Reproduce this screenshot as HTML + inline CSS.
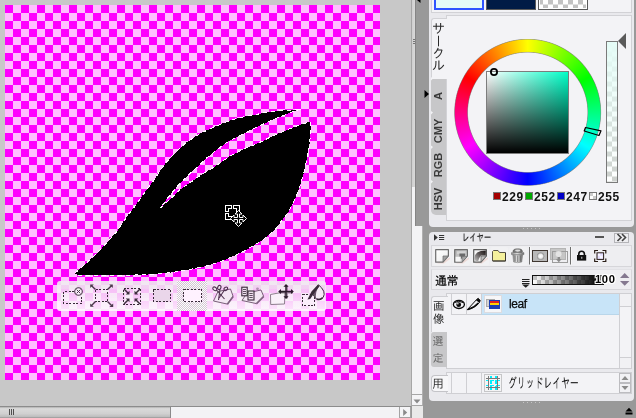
<!DOCTYPE html>
<html lang="ja">
<head>
<meta charset="utf-8">
<title>leaf</title>
<style>
*{box-sizing:border-box;margin:0;padding:0}
html,body{width:636px;height:418px;overflow:hidden;background:#999}
body{position:relative;font-family:"Liberation Sans","Noto Sans CJK JP",sans-serif;font-size:11px;color:#222}
.abs{position:absolute;will-change:transform}
#work{left:0;top:0;width:411px;height:406px;background:#c8c8c8}
#canvas{left:5px;top:5px;width:375px;height:375px;background:conic-gradient(#ffbfff 25%,#ff00ff 0 50%,#ffbfff 0 75%,#ff00ff 0) 0 0/16px 16px}
#leaf{left:0;top:0;width:411px;height:406px}
/* floating toolbar */
#ftb{left:57px;top:281px;width:269px;height:30px;border-radius:3px;background:linear-gradient(rgba(240,236,240,.9),rgba(240,236,240,.88) 26%,rgba(244,240,244,.8) 27%,rgba(246,242,246,.82) 50%,rgba(250,246,250,.88) 78%,rgba(252,250,252,.92));}
#ftb .hl{left:120px;top:0;width:30px;height:30px;background:conic-gradient(rgba(200,196,200,.8) 25%,rgba(255,255,255,.75) 0 50%,rgba(200,196,200,.8) 0 75%,rgba(255,255,255,.75) 0) 0 0/2px 2px}
/* scrollbars */
#hsb{left:0;top:406px;width:411px;height:12px;background:#f3f3f5;border-top:1px solid #8c8c8c}
#hthumb{left:0;top:407px;width:171px;height:11px;background:linear-gradient(#b0b0b0,#dadada 15%,#d0d0d0 60%,#bcbcbc 90%,#8e8e8e);border-right:1px solid #8a8a8a}
#hbtn{left:399px;top:407px;width:12px;height:11px;background:#f4f4f6;border:1px solid #a4a4a4;border-top:none}
#vsb{left:411px;top:0;width:12px;height:406px;background:#f3f3f5;border-left:1px solid #a6a6a6;border-right:1px solid #b0b0b0}
#vthumb{left:412px;top:0;width:4px;height:187px;background:linear-gradient(90deg,#cfcfcf,#dcdcdc)}
#vbtn{left:411px;top:394px;width:12px;height:12px;background:#f4f4f6;border:1px solid #a6a6a6;border-right-color:#b0b0b0}
#corner{left:412px;top:406px;width:11px;height:12px;background:#e9e9e9}
#dock{left:415px;top:0;width:14px;height:226px;background:#999;border-left:1px solid #858585}
/* panels */
.panel{background:#e9e9ed}
#p1{left:429px;top:0;width:205px;height:226.500px}
#p2{left:429px;top:232px;width:205px;height:168.500px;border-radius:4px}
.inner{background:#f3f3f6;border:1px solid #d2d2d6}

/* colour panel */
.sw{top:-10px;height:20px;width:50px;border:1px solid #5a5a5a}
#tabA{left:431px;top:18px;width:16px;height:61px;background:#f3f3f6;border:1px solid #d2d2d6;border-right:none;border-bottom:none;border-radius:3px 0 0 0}
.vt{writing-mode:vertical-rl;font-family:"Liberation Sans","IPAGothic",sans-serif;font-size:13px;line-height:13px;color:#2a2a2a;letter-spacing:-1px}
.itab{left:431px;width:15px;background:#c7c7c9}
.itab span{position:absolute;left:calc(50% - 1px);top:50%;transform:translate(-50%,-50%) rotate(-90deg);font-weight:bold;font-size:11px;line-height:11px;color:#3a3a3a;white-space:nowrap}
#ring{left:454px;top:39px;width:148px;height:148px;background:conic-gradient(from 0deg at 73.7px 73.3px,#ff0,#0f0,#0ff,#00f,#f0f,#f00,#ff0);-webkit-mask:radial-gradient(circle at 73.7px 73.3px,transparent 59.700px,#000 60.500px,#000 72.700px,transparent 73.500px);mask:radial-gradient(circle at 73.7px 73.3px,transparent 59.700px,#000 60.500px,#000 72.700px,transparent 73.500px)}
#ringin{left:454px;top:39px;width:148px;height:148px;background:radial-gradient(circle at 73.7px 73.3px,transparent 59.300px,rgba(110,110,110,.55) 60.100px,transparent 60.900px,transparent 72.300px,rgba(110,110,110,.55) 73.100px,transparent 73.900px)}
#sv{left:486px;top:71px;width:83px;height:83px;border:1px solid #7d7d7d;background:linear-gradient(to top,#000,rgba(0,0,0,0)),linear-gradient(to right,#fff,#00ffc8)}
#svm{left:490.2px;top:68.2px;width:7.6px;height:7.6px;border:1.9px solid #000;border-radius:50%}
#huem{left:584px;top:128.5px;width:17px;height:7px;border:1px solid #000;transform:rotate(17deg)}
#alpha{left:606px;top:41px;width:12px;height:142px;border:1px solid #7a7a7a;background:linear-gradient(#e5fcf7,rgba(229,252,247,0)),conic-gradient(#fff 25%,#cdd0cd 0 50%,#fff 0 75%,#cdd0cd 0) 0 -.5px/10px 10px}
#atri{left:618px;top:33px;width:0;height:0;border-top:8px solid transparent;border-bottom:8px solid transparent;border-right:8px solid #5a5a5a}
.cv{top:192px;width:8px;height:8px;border:1px solid #777}
.cn{top:191px;font-weight:bold;font-size:12px;line-height:12px;color:#111;letter-spacing:.55px;margin-left:-.8px}

/* layer panel */
.jp{font-family:"Liberation Sans","IPAGothic",sans-serif}
.box{background:#eeeef1;border:1px solid #d6d6da}
.lst{background:#f3f3f6;border:1px solid #cfcfd3}
.cell{border-left:1px solid #cfcfd3;background:#f3f3f6}
.gtab{left:431px;width:16px;padding-right:2px;background:#c7c7c9;color:#6a6a6a;font-size:11px;line-height:17px;text-align:center}
</style>
</head>
<body>
<div id="work" class="abs"></div>
<div id="canvas" class="abs"></div>
<svg id="leaf" class="abs" viewBox="0 0 411 406" shape-rendering="crispEdges">
<path id="lp" fill="#000" stroke="#fff" stroke-width="1" stroke-dasharray="4 4" d="M74.8,273.3 L82,267 87.9,261.7 93.9,256.3 99.9,250.3 105.9,243.7 111.8,237.2 117.8,230.3 122,223.6 127.9,215.3 133.9,207.5 139.9,199.1 145.9,190.8 151.8,183 154.3,179.6 160,170.9 165.8,163 171.5,156.6 178.7,149.4 185.9,142.9 193,137.9 200.2,133.6 207.4,130 214.5,126.9 222,123.6 231.5,119.8 244.9,116.6 255,114.9 261,113.4 267,112.2 272.9,111.4 278.9,110.8 284.9,110.3 290.9,110 296.8,109.6 302.2,109 296.8,110.4 290.9,112.5 284.9,114.9 278.9,117.3 272.9,119.7 267,122.5 261,125.1 255,128.1 247.8,131.6 241.8,134.6 235.9,137.5 229.9,140.5 223.9,144.7 217.9,148.9 212,153.7 206,158.5 200,164.6 196.8,167.6 190.9,172.5 184.9,178.5 178.9,184.5 172.9,191.7 167,198.8 159.8,208.4 167,201.8 172.9,196.5 178.9,190.5 184.9,186.3 190.9,182.1 196.8,177.9 202.8,173.7 208.8,170.2 214.5,166.9 218,164.3 223.9,160.3 229.9,156.1 235.9,153.1 241.8,150.1 247.8,147.1 254.5,144.8 261,141.8 267,138.8 272.9,135.9 278.9,133.2 284.9,130.8 290.9,128.4 296.8,126.1 302.8,123.9 310.6,121.5 310.6,129.9 310,139.4 309,147.8 307.8,152 305.9,163.9 303,175.9 299.5,187.8 294.7,199.8 288.7,211.8 280.3,222.5 276.2,228.5 271.7,232.5 264.8,238.4 259.7,241.8 247.9,248.9 236.1,254.8 224.3,260.2 212.5,264.2 200.8,267.3 189,269.6 177.2,271.7 165.4,273.2 153.6,274.3 130,275.2 78,275.2Z"/>
</svg>
<div id="ftb" class="abs"><div class="hl abs"></div></div>
<svg class="abs" style="left:56px;top:280px;overflow:visible" width="271" height="31" viewBox="56 280 271 31">
<defs><filter id="sh" x="-20%" y="-20%" width="150%" height="150%"><feGaussianBlur stdDeviation=".5"/></filter></defs>
<g fill="none" stroke="#3a2a3a" stroke-width="1" stroke-dasharray="2 1.5" shape-rendering="crispEdges">
<path d="M74,291.5 H63.5 V303.5 H81.5 V296"/>
<rect x="95.5" y="289.5" width="12" height="12"/>
<rect x="123.5" y="288.5" width="17" height="16"/>
<rect x="153.5" y="289.5" width="17" height="12" fill="#ead6ea"/>
<rect x="183.500" y="289.5" width="18" height="12" fill="#fff2ff"/>
<rect x="302.5" y="294.500" width="12" height="11" fill="#fbeefb"/>
</g>
<!-- circle x -->
<circle cx="78.5" cy="291.5" r="3.8" fill="#fbeffb" stroke="#4a3a4a" stroke-width="1.1"/>
<path d="M76.6,289.6 L80.4,293.4 M80.4,289.6 L76.6,293.4" stroke="#4a3a4a" stroke-width="1"/>
<!-- expand arrows -->
<g stroke="#4a384a" stroke-width="1.4" fill="#4a384a">
<path d="M95.500,289.5 L91.500,285.8 M107.5,289.5 L111.500,285.8 M95.500,301.5 L91.500,305.5 M107.5,301.5 L111.800,305.800" fill="none"/>
<path d="M90.200,284.6 h3.600 l-3.600,3.400Z M112.800,284.6 h-3.600 l3.600,3.400Z M90.200,306.800 h3.600 l-3.600,-3.400Z M113.200,307 h-3.800 l3.800,-3.600Z" stroke="none"/>
</g>
<!-- contract arrows -->
<g stroke="#3e2e3e" stroke-width="1.5" fill="#3e2e3e">
<path d="M124,289 L128,293 M140,289 L136,293 M124,304 L128,300 M140,304 L136,300" fill="none"/>
<path d="M129.500,294.500 h-3.800 l3.800,-3.800Z M134.500,294.500 h3.800 l-3.800,-3.800Z M129.500,298.500 h-3.800 l3.800,3.800Z M134.500,298.500 h3.800 l-3.800,3.800Z" stroke="none"/>
</g>
<!-- cut -->
<path d="M218,291.500 L230.500,289 L233,296 L227,304 L213.500,301Z" fill="#f3e6f3" stroke="#6a506a" stroke-width=".9"/>
<path d="M227,304 L233,296 L233.800,297 L227.800,305Z" fill="#7a5a7a"/>
<g fill="none" stroke="#503050" stroke-width="1.100">
<ellipse cx="214.800" cy="288.800" rx="2.200" ry="1.600" transform="rotate(35 214.800 288.800)"/>
<ellipse cx="219.300" cy="287.500" rx="1.600" ry="2.200" transform="rotate(20 219.300 287.500)"/>
<path d="M216.500,290 L224.500,299 M220,289.500 L218.500,300"/>
<ellipse cx="225.800" cy="288.800" rx="2" ry="1.500" transform="rotate(-35 225.800 288.800)"/>
<path d="M224.500,290 L219,298"/>
</g>
<!-- copy -->
<path d="M247,293 L261,290 L263.500,296 L256,303.500 L242,300.500Z" fill="#f3e6f3" stroke="#6a506a" stroke-width=".9"/>
<path d="M256,303.500 L263.500,296 L264.300,297 L256.800,304.500Z" fill="#7a5a7a"/>
<rect x="241.800" y="287.200" width="5.400" height="8.600" fill="#f0e0f0" stroke="#3a2a3a" stroke-width="1.100"/>
<path d="M243,289.500h3M243,291.500h3M243,293.500h3" stroke="#3a2a3a" stroke-width=".8"/>
<rect x="248" y="291" width="6" height="9" fill="#f0e0f0" stroke="#3a2a3a" stroke-width="1.100"/>
<path d="M249.300,293.500h3.400M249.300,295.500h3.400M249.300,297.500h3.400" stroke="#3a2a3a" stroke-width=".8"/>
<circle cx="257.500" cy="288.800" r="1.400" fill="#b090b0"/>
<!-- move -->
<path d="M270.500,294.500 L285,291.800 L284.500,304 L270.700,304.500Z" fill="#f9f0f9" stroke="#8d7d8d" stroke-width="1"/>
<g filter="url(#sh)" opacity=".45"><path d="M279.500,292.500 H293 M286.800,285.500 V298.500" stroke="#2a1a2a" stroke-width="2" fill="none"/></g>
<g stroke="#2a1a2a" stroke-width="1.400" fill="#2a1a2a">
<path d="M279.500,291.500 H292.500 M286,285.500 V297.500" fill="none"/>
<path d="M278.200,291.500 l2.800,-2.600 v5.200Z M293.800,291.500 l-2.800,-2.600 v5.200Z M286,284 l-2.600,2.800 h5.200Z M286,299 l-2.600,-2.800 h5.200Z" stroke="none"/>
</g>
<!-- bucket -->
<path d="M318.500,284.800 Q326.500,291.500 323.300,297.300 Q320.500,300.800 316.300,299 L312.500,294Z" fill="#f6eaf6" stroke="#3a2a3a" stroke-width="1" stroke-linejoin="round"/>
<path d="M318.500,284.800 L312.500,294 L316.300,299 Q314.500,292 319.500,286Z" fill="#6a566a"/>
<path d="M322.500,297.800 Q320.500,300.300 316.800,299.200" fill="none" stroke="#3a2a3a" stroke-width="1.600"/>
<path d="M318,284.500 L311.500,291.500 L307.500,299.500 L310.200,299 L314,293.500 L319.200,286.500Z" fill="#3a2a3a"/>
</svg>
<svg class="abs" style="left:220px;top:200px" width="30" height="30" viewBox="220 200 30 30" shape-rendering="crispEdges">
<g fill="#000" stroke="#fff" stroke-width="1">
<path d="M225.5,205.5 H231.5 V208.5 H228.5 V211.5 H225.5Z"/>
<path d="M233.5,205.5 H239.5 V211.5 H236.5 V208.5 H233.5Z"/>
<path d="M225.5,213.5 H228.5 V216.5 H231.5 V219.5 H225.5Z"/>
</g>
<path shape-rendering="auto" fill="#000" stroke="#fff" stroke-width="1" d="M238.5,210.500 L242,214 H239.500 V217.500 H243 V215 L246.500,218.500 L243,222 V219.500 H239.500 V223 H242 L238.500,226.500 L235,223 H237.500 V219.500 H234 V222 L230.500,218.500 L234,215 V217.500 H237.500 V214 H235Z"/>
</svg>
<div id="hsb" class="abs"></div><div id="hthumb" class="abs"></div><div id="hbtn" class="abs"></div>
<div id="vsb" class="abs"></div><div id="vthumb" class="abs"></div><div id="vbtn" class="abs"></div>
<svg class="abs" style="left:400px;top:394px" width="22" height="24" viewBox="400 394 22 24"><path d="M413.500,399.500 H420.500 L417,403.500Z" fill="#8a8a8a"/><path d="M403.200,409 L407.200,412.500 L403.200,416Z" fill="#8a8a8a"/></svg>
<svg class="abs" style="left:4px;top:408px" width="12" height="8" viewBox="0 0 12 8"><path d="M5.500,1V7M7.500,1V7M9.500,1V7" stroke="#505050" stroke-width="1" shape-rendering="crispEdges"/></svg>
<svg class="abs" style="left:412px;top:38px" width="4" height="6" viewBox="0 0 4 6" shape-rendering="crispEdges"><path d="M1,1.500h3M1,3.500h3M1,5.500h3" stroke="#777" stroke-width="1"/></svg>
<div id="corner" class="abs"></div>
<div id="dock" class="abs"></div>
<div id="p1" class="abs panel" style="border-radius:0 0 4px 4px"></div>
<div class="abs inner" style="left:431px;top:-3px;width:201px;height:16px"></div>
<div class="abs sw" style="left:434px;border:2px solid #2f55ff;background:#e5fcf7"></div>
<div class="abs sw" style="left:486px;background:#001b46"></div>
<div class="abs sw" style="left:538px;background:conic-gradient(#fff 25%,#c2c2c2 0 50%,#fff 0 75%,#c2c2c2 0) 4px 3.500px/10px 10px;box-shadow:inset 0 0 0 1px #fff"></div>
<div class="abs inner" style="left:446px;top:15px;width:186px;height:206px"></div>
<div id="tabA" class="abs"></div>
<div class="abs vt" style="left:432px;top:21.5px;width:13px">サークル</div>
<div class="abs itab" style="top:78.500px;height:34px"><span>A</span></div>
<div class="abs itab" style="top:112.500px;height:35px"><span>CMY</span></div>
<div class="abs itab" style="top:147px;height:35px"><span>RGB</span></div>
<div class="abs itab" style="top:181.500px;height:33px;border-radius:0 0 0 5px"><span>HSV</span></div>
<svg class="abs" style="left:431px;top:76px" width="3" height="110" viewBox="0 0 3 110"><path d="M0,1 L2,2.500 L0,4.500Z M0,35 L2,36.500 L0,38.500Z M0,69.500 L2,71 L0,73Z M0,104 L2,105.500 L0,107.500Z" fill="#f3f3f6"/></svg>
<div id="ring" class="abs"></div><div id="ringin" class="abs"></div>
<div id="sv" class="abs"></div><svg class="abs" style="left:455px;top:39px" width="147" height="147" viewBox="455 39 147 147"><circle cx="494" cy="72" r="3.100" fill="none" stroke="#000" stroke-width="1.800"/><path d="M585.500,127.500 L601,130.800 L599,135.500 L584.200,131Z" fill="none" stroke="#000" stroke-width="1.200" stroke-linejoin="round"/></svg>
<div id="alpha" class="abs"></div><div id="atri" class="abs"></div>
<div class="abs cv" style="left:493px;background:#a40000"></div><div class="abs cn" style="left:503px">229</div>
<div class="abs cv" style="left:525px;background:#00a800"></div><div class="abs cn" style="left:535px">252</div>
<div class="abs cv" style="left:557px;background:#0000c8"></div><div class="abs cn" style="left:567px">247</div>
<div class="abs cv" style="left:589px;background:conic-gradient(#fff 25%,#ccc 0 50%,#fff 0 75%,#ccc 0) 0 0/6px 6px"></div><div class="abs cn" style="left:599px">255</div>
<svg class="abs" style="left:424px;top:89px" width="6" height="10" viewBox="0 0 6 10"><path d="M0.5,1 L5,5 L0.5,9Z" fill="#000"/></svg>
<svg class="abs" style="left:416px;top:0" width="6" height="4" viewBox="0 0 6 4"><path d="M1,0 L4.5,0 L4.5,3Z" fill="#000"/></svg>
<div id="p2" class="abs panel"></div>
<svg class="abs" style="left:433px;top:233px" width="13" height="9" viewBox="0 0 13 9"><path d="M1,1.2 L4.8,4.5 L1,7.8Z" fill="#333"/><path d="M6,2.5h5.2M6,4.5h5.2M6,6.5h5.2" stroke="#333" stroke-width="1"/></svg>
<div class="abs jp" style="left:462px;top:232px;font-size:10px;line-height:11px;color:#111;-webkit-text-stroke:.2px #111;white-space:nowrap;transform-origin:0 0;transform:scaleX(.73)">レイヤー</div>
<div class="abs" style="left:595px;top:236px;width:9px;height:2px;background:#555"></div>
<div class="abs" style="left:614px;top:232.500px;width:15px;height:10px;border:1px solid #b4b4b8;background:#ededf0"></div>
<svg class="abs" style="left:616px;top:233px" width="12" height="9" viewBox="0 0 12 9"><path d="M1.5,1 L5,4.5 L1.5,8 M6,1 L9.5,4.5 L6,8" fill="none" stroke="#444" stroke-width="1.6"/></svg>
<div class="abs box" style="left:431px;top:245px;width:201px;height:22px"></div>
<svg class="abs" style="left:431px;top:245px" width="201" height="22" viewBox="431 245 201 22">
<defs>
<linearGradient id="pg" x1="0" y1="0" x2="1" y2="1"><stop offset="0" stop-color="#fff"/><stop offset=".6" stop-color="#f4f4f4"/><stop offset="1" stop-color="#cfcfcf"/></linearGradient>
<linearGradient id="pg2" x1="0" y1="0" x2="1" y2="1"><stop offset="0" stop-color="#b4b4b4"/><stop offset="1" stop-color="#d8d8d8"/></linearGradient>
<linearGradient id="dk" x1="1" y1="0" x2="0" y2="1"><stop offset="0" stop-color="#1a1414"/><stop offset=".45" stop-color="#5a5454"/><stop offset="1" stop-color="#c8c8c8"/></linearGradient>
<linearGradient id="tr" x1="0" y1="0" x2="1" y2="0"><stop offset="0" stop-color="#8a8a8a"/><stop offset=".45" stop-color="#e6e6e6"/><stop offset="1" stop-color="#6a6a6a"/></linearGradient>
<radialGradient id="rg"><stop offset="0" stop-color="#fff"/><stop offset=".55" stop-color="#eee"/><stop offset="1" stop-color="#8a8a8a"/></radialGradient>
</defs>
<!-- new layer -->
<g fill="#f1f1f3"><rect x="433" y="247" width="18" height="18.500" rx="2"/><rect x="452.300" y="247" width="17.500" height="18.500" rx="2"/><rect x="471.200" y="247" width="17.800" height="18.500" rx="2"/><rect x="490.300" y="247" width="17.800" height="18.500" rx="2"/><rect x="509.300" y="247" width="17.800" height="18.500" rx="2"/></g>
<path d="M437,263.400 L450,257.500 L450,259 L444,263.400Z" fill="#ecd4d0" opacity=".8"/>
<path d="M435.700,249.700 H448.400 V255.800 L443,262.200 H435.700Z" fill="url(#pg)" stroke="#6c6c6c" stroke-width="1.200" stroke-linejoin="round"/>
<path d="M443,262 V256 H448.300Z" fill="#a2a2a2" stroke="#6c6c6c" stroke-width=".7"/>
<!-- copy layer -->
<path d="M456,263.400 L469,257.500 L469,259 L463,263.400Z" fill="#ecd4d0" opacity=".8"/>
<path d="M454.700,249.700 H467.400 V255.800 L462,262.200 H454.700Z" fill="url(#pg2)" stroke="#6c6c6c" stroke-width="1.200" stroke-linejoin="round"/>
<rect x="457" y="251.300" width="8.500" height="2.600" fill="#d4d4d4"/>
<rect x="455.600" y="256.800" width="4.800" height="4.800" fill="#f6f6f6"/>
<path d="M459.400,253.600 H465.200 V256.400 H464 V258.600 H461 V256.400 H459.400Z" fill="#6a6a6a"/>
<path d="M460.400,259 H462.500 V261.600 H460.400Z" fill="#f0f0f0"/>
<path d="M462,262 V256.600 H467.300Z" fill="#a8a8a8" stroke="#6c6c6c" stroke-width=".6"/>
<!-- effect layer -->
<path d="M475,263.400 L488,257.500 L488,259 L482,263.400Z" fill="#ecd4d0" opacity=".8"/>
<path d="M473.700,249.700 H486.400 V255.800 L481,262.200 H473.700Z" fill="#f4f4f4" stroke="#5c5c5c" stroke-width="1.200" stroke-linejoin="round"/>
<path d="M474.400,258.500 Q474.400,250.400 485.800,250.400 L485.800,255.600 L481,255.600 Q478.500,258.500 478,261.500 L476.500,261.500 Q474.400,260.500 474.400,258.500Z" fill="url(#dk)"/>
<path d="M481,262 V256 H486.300Z" fill="#c0c0c0" stroke="#5c5c5c" stroke-width=".7"/>
<!-- folder -->
<path d="M492.5,261 V251.5 L493.5,250.5 H498 L499.5,252.5 H505.5 V261Z" fill="#f4f09c" stroke="#5a5648" stroke-width="1" stroke-linejoin="round"/>
<path d="M505.5,253 V261 H493" fill="none" stroke="#3c3830" stroke-width="1"/>
<!-- trash -->
<ellipse cx="517.7" cy="251.3" rx="4.6" ry="2.4" fill="#777" stroke="#555" stroke-width=".8"/>
<ellipse cx="517.7" cy="250.6" rx="2.6" ry="1.1" fill="#ddd"/>
<path d="M511.5,252.6 H523.9 V254.6 H511.5Z" fill="url(#tr)" stroke="#666" stroke-width=".5"/>
<path d="M512.8,254.8 H522.6 L521.8,262 Q517.7,263.4 513.6,262Z" fill="url(#tr)" stroke="#777" stroke-width=".5"/>
<path d="M515,255.5 V261.5 M517.7,255.5 V262 M520.4,255.5 V261.5" stroke="#666" stroke-width=".8"/>
<!-- separators -->
<path d="M529.5,247 V264.5 M570.5,247 V264.5" stroke="#6e6e6e"/>
<path d="M530.5,247 V264.5 M571.5,247 V264.5" stroke="#f8f8f8"/>
<!-- mask -->
<rect x="532.5" y="250.5" width="15" height="11" fill="#b9b9b9" stroke="#3f3630"/>
<circle cx="540.6" cy="256.2" r="3.6" fill="url(#rg)"/>
<!-- mask disabled -->
<rect x="550.5" y="248.5" width="15" height="11" fill="#c6c6c6" stroke="#b4b4b4"/>
<rect x="552.5" y="251.5" width="15" height="11" fill="none" stroke="#9c9c9c"/>
<circle cx="558.6" cy="254.2" r="3.4" fill="#e4e4e4" stroke="#bdbdbd" stroke-width=".6"/>
<path d="M557.6,257 h2.4 v2.2 h1.6 l-2.8,3 l-2.8,-3 h1.6Z" fill="#8a8a8a"/>
<!-- lock -->
<rect x="573" y="247" width="17" height="18" fill="#efeff2"/>
<rect x="591" y="247" width="18" height="18" fill="#efeff2"/>
<path d="M578.8,255.5 V254 A2.8,2.8 0 0 1 584.4,254 V255.5" fill="none" stroke="#111" stroke-width="1.6"/>
<rect x="577" y="255" width="9.2" height="5.6" fill="#111"/>
<rect x="581" y="256.8" width="1.4" height="2" fill="#999"/>
<!-- frame -->
<path d="M594.7,253.5 V250.5 H598 M602.5,250.5 H605.8 V253.5 M605.8,258.5 V261.5 H602.5 M598,261.5 H594.7 V258.5" fill="none" stroke="#2a1d16" stroke-width="1.2"/>
<rect x="597" y="252.8" width="6.6" height="6.6" fill="#e6e0ff" stroke="#2a1d16" stroke-width="1"/>
<path d="M598,253.8h2v2h-2z M600,255.8h2.4v2.4h-2.4z" fill="#fff" opacity=".8"/>
</svg>
<div class="abs box" style="left:431px;top:269px;width:201px;height:21px;border-top-color:#e2e2e6"></div>
<div class="abs jp" style="left:435px;top:274px;font-size:12px;line-height:14px;color:#000;-webkit-text-stroke:.2px #000;white-space:nowrap;letter-spacing:-.5px">通常</div>
<svg class="abs" style="left:521px;top:278px" width="10" height="10" viewBox="0 0 10 10"><path d="M1,1.5h7.5M1,3.5h7.5M1,5.5h7.5" stroke="#222" stroke-width="1"/><path d="M1,6.5 L8.5,6.5 L4.75,9.8Z" fill="#222"/></svg>
<div class="abs" style="left:532px;top:275px;width:72px;height:10px;border:1px solid #111;background:linear-gradient(90deg,rgba(0,0,0,0),#000 95%),conic-gradient(#fff 25%,#c8c8c8 0 50%,#fff 0 75%,#c8c8c8 0) 0 0/8px 8px"></div>
<div class="abs" style="left:595.300px;top:272.500px;font-weight:bold;font-size:10px;line-height:13px;letter-spacing:.550px;color:#000;transform-origin:0 0;transform:scaleX(1.12);will-change:transform;text-shadow:0 0 1px #fff,1px 0 0 #fff,-1px 0 0 #fff,0 1px 0 #fff,0 -1px 0 #fff,1px 1px 0 #fff,-1px -1px 0 #fff,1px -1px 0 #fff,-1px 1px 0 #fff">100</div>
<svg class="abs" style="left:619px;top:272px" width="12" height="15" viewBox="0 0 12 15"><path d="M1,6 L5.700,1 L10.400,6Z M1,9 L5.700,13.800 L10.400,9Z" fill="#857990"/></svg>
<div class="abs lst" style="left:446px;top:293px;width:186px;height:76px"></div>
<div class="abs" style="left:431px;top:296px;width:17px;height:36px;background:#f3f3f6;border:1px solid #cfcfd3;border-right:none;border-bottom:none;border-radius:3px 0 0 0"></div>
<div class="abs jp" style="left:432.5px;top:299.5px;font-size:11.500px;line-height:12.500px;width:12px;color:#2a2a2a">画像</div>
<div class="abs gtab jp" style="top:332px;height:18px;border-radius:3px 0 0 0;line-height:19px">選</div>
<div class="abs gtab jp" style="top:350px;height:17px;border-radius:0 0 0 3px">定</div>
<div class="abs cell" style="left:451px;top:294px;width:15px;height:21px;border-bottom:1px solid #cfcfd3"></div>
<div class="abs cell" style="left:466px;top:294px;width:16px;height:21px;border-bottom:1px solid #cfcfd3"></div>
<svg class="abs" style="left:451px;top:294px" width="31" height="21" viewBox="451 294 31 21">
<ellipse cx="458.9" cy="304.4" rx="5.5" ry="4.1" fill="none" stroke="#0a0a0a" stroke-width="1.3"/>
<path d="M454.6,302.6 Q458.8,299.8 463.2,302.6" fill="none" stroke="#0a0a0a" stroke-width="1"/>
<circle cx="458.7" cy="304.7" r="2.4" fill="#0a0a0a"/>
<circle cx="457.9" cy="303.8" r=".75" fill="#fff"/>
<path d="M467.2,309.8 L476.2,300 Q477,299 478.2,298.3 L480.2,300.6 Q479.8,302.2 478.6,303.4 Q474.5,308.2 467.2,309.8Z" fill="#f3f3f6" stroke="#0a0a0a" stroke-width="1" stroke-linejoin="round"/>
<path d="M476,300.2 L478.3,298.2 L480.3,300.5 L479.4,302.8Z" fill="#0a0a0a"/>
<path d="M468,309.5 Q474.5,307.5 478.4,303" fill="none" stroke="#0a0a0a" stroke-width="1.5"/>
</svg>
<div class="abs" style="left:481px;top:294px;width:138px;height:21px;background:#c8e4f8;border-left:1px solid #cfcfd3;border-bottom:1px solid #b9d6ea"></div>
<div class="abs" style="left:484px;top:295px;width:18px;height:18px;background:#f6f6f8;border:1px solid #dcdce0"></div>
<div class="abs" style="left:486px;top:299px;width:9px;height:8px;background:#d4d4d4;border:1px solid #aaa"></div>
<div class="abs" style="left:488.5px;top:300px;width:11px;height:9px;border:1px solid #1b3cb0;background:linear-gradient(#e02020 0 25%,#ffd000 25% 62%,#1b3cb0 62%)"></div>
<div class="abs" style="left:509px;top:296.5px;font-size:12px;line-height:14px;color:#0a0a0a;letter-spacing:-.45px;-webkit-text-stroke:.25px #0a0a0a">leaf</div>
<div class="abs" style="left:619px;top:294px;width:12px;height:74px;background:#f3f3f6;border-left:1px solid #cfcfd3"></div>
<div class="abs" style="left:619px;top:294px;width:12px;height:12.500px;border:1px solid #cfcfd3;border-top:none;border-right:none;background:#f1f1f4"></div>
<div class="abs" style="left:619px;top:357px;width:12px;height:11px;border:1px solid #cfcfd3;border-bottom:none;border-right:none;background:#f1f1f4"></div>
<div class="abs lst" style="left:446px;top:372px;width:186px;height:22px"></div>
<div class="abs" style="left:431px;top:375px;width:17px;height:17px;background:#f7f7f9;border:1px solid #c4c4c8;border-right:none;border-radius:4px 0 0 4px"></div>
<div class="abs jp" style="left:432px;top:377.500px;font-size:12px;line-height:13px;color:#333">用</div>
<div class="abs cell" style="left:451px;top:373px;width:15px;height:20px"></div>
<div class="abs cell" style="left:466px;top:373px;width:16px;height:20px;border-right:1px solid #cfcfd3"></div>
<svg class="abs" style="left:484px;top:374px" width="18" height="18" viewBox="484 374 18 18" shape-rendering="crispEdges"><rect x="484.500" y="374.500" width="17" height="17" fill="#f4f4f5" stroke="#c6c6c8"/><path d="M490.750,376v14M495.750,376v14M486,380.500h14M486,385.500h14" stroke="#00f0ff" stroke-width="1.500" stroke-dasharray="2 1.500 4.500 1.500 4.500 1.500"/><path d="M488.500,376v14M497.500,376v14M486,378.500h14M486,387.500h14" stroke="#7a7a7a" stroke-width="1"/></svg>
<div class="abs jp" style="left:508px;top:374.5px;font-size:14px;line-height:16px;color:#111;white-space:nowrap;transform-origin:0 0;transform:scaleX(.632)">グリッドレイヤー</div>
<div class="abs" style="left:619px;top:373px;width:12px;height:10px;border:1px solid #bcbcc0;background:#f1f1f4"></div>
<div class="abs" style="left:619px;top:383px;width:12px;height:10px;border:1px solid #bcbcc0;background:#f1f1f4"></div>
<svg class="abs" style="left:619px;top:373px" width="12" height="20" viewBox="0 0 12 20"><path d="M2.5,7 L6,3 L9.5,7Z M2.5,13 L6,17 L9.5,13Z" fill="#8a8a8a"/></svg>
<svg class="abs" style="left:625px;top:407px" width="9" height="9" viewBox="0 0 9 9"><path d="M0.5,4.5 L4,0.8 L7.5,4.5Z" fill="#000"/><rect x=".5" y="5.5" width="7" height="2" fill="#000"/></svg>
<div class="abs" style="left:523px;top:228px;width:18px;height:1px;background:repeating-linear-gradient(90deg,#c4c4c4 0 1px,transparent 1px 4px)"></div>
<div class="abs" style="left:523px;top:402px;width:18px;height:1px;background:repeating-linear-gradient(90deg,#c4c4c4 0 1px,transparent 1px 4px)"></div>
</body>
</html>
